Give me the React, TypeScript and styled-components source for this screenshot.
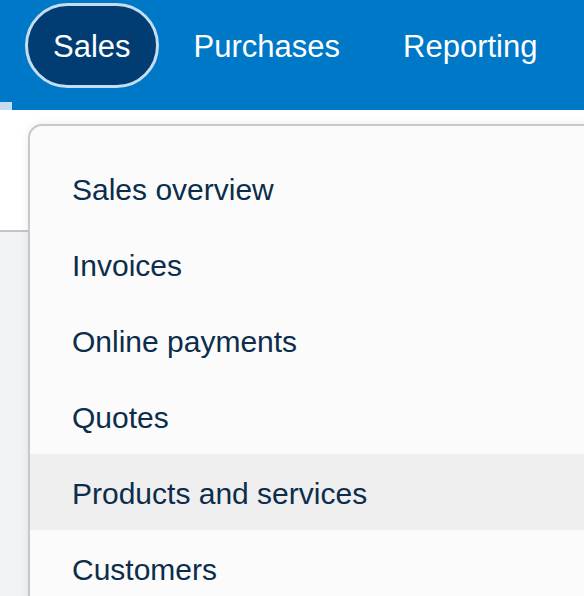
import styled, { createGlobalStyle } from 'styled-components';

const GlobalStyle = createGlobalStyle`
  html, body {
    margin: 0;
    padding: 0;
  }
  body {
    font-family: "Liberation Sans", Arial, Helvetica, sans-serif;
    -webkit-font-smoothing: antialiased;
  }
`;

const Page = styled.div`
  position: relative;
  display: flex;
  flex-direction: column;
  min-height: 596px;
  background: #f2f3f5;
  overflow: hidden;
`;

const TopBar = styled.header`
  display: flex;
  flex-direction: column;
  height: 110px;
  background: #0078c8;
`;

const NavRow = styled.nav`
  display: flex;
  align-items: flex-start;
  gap: 7px;
  height: 102px;
  padding: 3px 0 0 25px;
  box-sizing: border-box;
`;

const NavItem = styled.a<{ $active?: boolean }>`
  display: flex;
  align-items: center;
  height: 85px;
  padding: 2px 25px 0;
  box-sizing: border-box;
  border: 3px solid ${({ $active }) => ($active ? '#c4ddf3' : 'transparent')};
  border-radius: 999px;
  background: ${({ $active }) => ($active ? '#013d72' : 'transparent')};
  color: #ffffff;
  font-size: 31px;
  line-height: 1;
  text-decoration: none;
  cursor: pointer;
`;

const Marker = styled.div`
  width: 12px;
  height: 8px;
  background: #c4ddf3;
`;

const SubHeader = styled.div`
  height: 120px;
  background: #ffffff;
  border-bottom: 2px solid #c3c5c9;
`;

const Menu = styled.ul`
  position: absolute;
  top: 124px;
  left: 28px;
  right: -30px;
  bottom: -40px;
  margin: 0;
  padding: 24px 0 0;
  list-style: none;
  background: #fbfbfb;
  border: 2px solid #c6c8cc;
  border-radius: 14px;
  box-shadow: 0 0 10px rgba(0, 0, 0, 0.08);
`;

const MenuItem = styled.li<{ $hover?: boolean }>`
  display: flex;
  align-items: center;
  height: 76px;
  padding: 3px 0 0 42px;
  box-sizing: border-box;
  background: ${({ $hover }) => ($hover ? '#efefef' : 'transparent')};
  color: #0c2d4b;
  font-size: 30px;
  cursor: pointer;
`;

const navItems = ['Sales', 'Purchases', 'Reporting'];

const menuItems = [
  'Sales overview',
  'Invoices',
  'Online payments',
  'Quotes',
  'Products and services',
  'Customers',
];

export default function App() {
  return (
    <>
      <GlobalStyle />
      <Page>
        <TopBar>
          <NavRow>
            {navItems.map((item) => (
              <NavItem key={item} $active={item === 'Sales'}>
                {item}
              </NavItem>
            ))}
          </NavRow>
          <Marker />
        </TopBar>
        <SubHeader />
        <Menu>
          {menuItems.map((item) => (
            <MenuItem key={item} $hover={item === 'Products and services'}>
              {item}
            </MenuItem>
          ))}
        </Menu>
      </Page>
    </>
  );
}
